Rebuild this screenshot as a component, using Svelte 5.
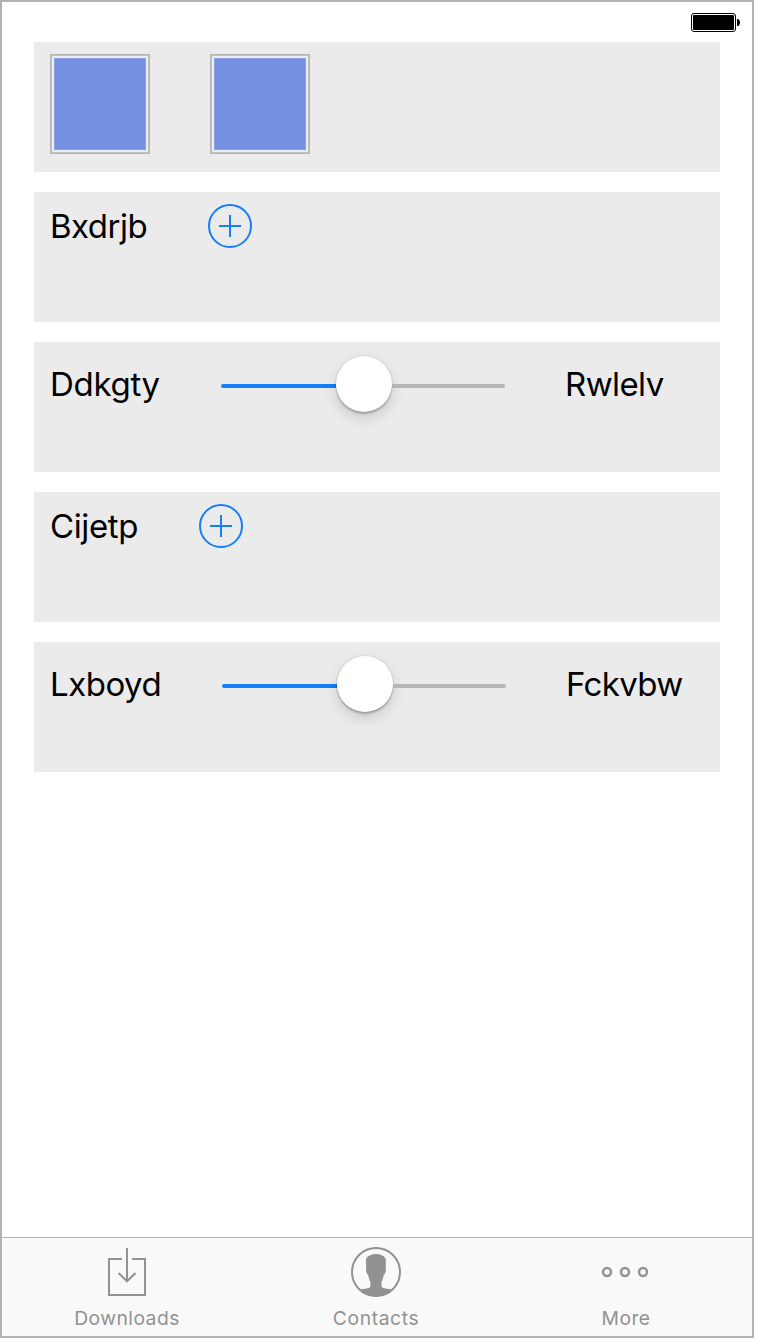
<script>
  const rows = [
    { kind: 'swatches' },
    { kind: 'add', label: 'Bxdrjb', width: 98, spacing: -0.5 },
    { kind: 'slider', label: 'Ddkgty', width: 111, spacing: -0.3, end: 'Rwlelv', endSpacing: -0.6 },
    { kind: 'add', label: 'Cijetp', width: 89, spacing: -0.4 },
    { kind: 'slider', label: 'Lxboyd', width: 112, spacing: -0.5, end: 'Fckvbw', endSpacing: -0.65 }
  ];
</script>

<div class="screen">
  <header>
    <svg width="50" height="20" viewBox="0 0 50 20">
      <rect x="1.5" y="1.5" width="44" height="18" rx="2.5" fill="none" stroke="#000" />
      <rect x="3" y="3" width="41" height="15" rx="1" />
      <path d="M47 7h1.2q1.8 1.2 1.8 3.5t-1.8 3.5h-1.2z" />
    </svg>
  </header>

  <main>
    {#each rows as row}
      <section>
        {#if row.kind === 'swatches'}
          <div class="swatch"></div>
          <div class="swatch"></div>
        {:else if row.kind === 'add'}
          <span class="label" style:width="{row.width}px" style:letter-spacing="{row.spacing}px">{row.label}</span>
          <button aria-label="Add">
            <svg width="44" height="44" viewBox="0 0 44 44" fill="none" stroke="#147efb" stroke-width="2">
              <circle cx="22" cy="22" r="21" />
              <path d="M11 22H33M22 11V33" />
            </svg>
          </button>
        {:else}
          <span class="label tall" style:width="{row.width}px" style:letter-spacing="{row.spacing}px">{row.label}</span>
          <div class="slider">
            <div class="fill"></div>
            <div class="thumb"></div>
            <div class="rest"></div>
          </div>
          <span class="label tall" style:letter-spacing="{row.endSpacing}px">{row.end}</span>
        {/if}
      </section>
    {/each}
  </main>

  <nav>
    <div class="tab">
      <svg width="50" height="50" viewBox="0 0 50 50" fill="none" stroke="#929292" stroke-width="2">
        <path d="M20 12H7V48H43V12H30M25 1V33M16.5 26L25 34.3L33.5 26" />
      </svg>
      <span>Downloads</span>
    </div>
    <div class="tab">
      <svg width="50" height="50" viewBox="0 0 50 50">
        <circle cx="25" cy="25" r="24" fill="none" stroke="#929292" stroke-width="2" />
        <path fill="#929292" d="M9 43C12 41 19 42 19.300 39.500C19.700 37 19.500 35 18.800 33.500Q17.700 31.500 17.200 28C15.700 27.500 14.500 23 15.200 21L14.900 13C15 9.500 20 7 25 7S34.700 9.500 34.900 13L34.700 21C35.400 23 34.200 27.500 32.700 28Q32.200 31.500 31.100 33.500C30.400 35 30.200 37 30.600 39.500C31 42 38 41 41 43Q34 49.500 25 49.500Q16 49.500 9 43Z" />
      </svg>
      <span>Contacts</span>
    </div>
    <div class="tab">
      <svg width="50" height="50" viewBox="0 0 50 50" fill="none" stroke="#929292" stroke-width="2.5">
        <circle cx="6" cy="25" r="4" /><circle cx="24" cy="25" r="4" /><circle cx="42" cy="25" r="4" />
      </svg>
      <span>More</span>
    </div>
  </nav>
</div>

<style>
  :global(body) { background: #fff; }
  .screen {
    box-sizing: border-box;
    width: 754px;
    height: 1338px;
    border: 2px solid #b2b2b2;
    background: #fff;
    display: flex;
    flex-direction: column;
    font-family: Inter, "Liberation Sans", sans-serif;
    color: #000;
  }
  header {
    height: 40px;
    box-sizing: border-box;
    padding: 10px 12px 0 0;
    display: flex;
    justify-content: flex-end;
  }
  svg { display: block; flex: none; }
  main {
    flex: 1;
    padding: 0 32px;
    display: flex;
    flex-direction: column;
    gap: 20px;
  }
  section {
    box-sizing: border-box;
    height: 130px;
    padding: 12px 16px;
    background: #ebebeb;
    display: flex;
    align-items: flex-start;
    gap: 60px;
  }
  .swatch {
    box-sizing: border-box;
    width: 100px;
    height: 100px;
    border: 1px solid #b3b3b3;
    box-shadow: inset 0 0 0 1px #c2c2c2, inset 0 0 0 2px #eeeeee, inset 0 0 0 3px #e4e9fa, inset 0 0 0 4px #8b9fe8;
    background: #758fe3;
  }
  .label {
    flex: none;
    font-size: 33px;
    line-height: 44px;
    white-space: nowrap;
  }
  .label.tall { line-height: 60px; }
  button { padding: 0; border: 0; background: none; }
  .slider {
    width: 284px;
    height: 60px;
    flex: none;
    display: flex;
    align-items: center;
  }
  .fill, .rest { height: 4px; margin-top: 4px; }
  .fill { width: 115px; background: #147efb; border-radius: 2px 0 0 2px; }
  .rest { flex: 1; background: #b6b6b6; border-radius: 0 2px 2px 0; }
  .thumb {
    width: 56px;
    height: 56px;
    border-radius: 50%;
    background: #fff;
    box-shadow: 0 0 0 1px rgba(0, 0, 0, 0.05), 0 2px 2px rgba(0, 0, 0, 0.22), 0 6px 14px rgba(0, 0, 0, 0.15);
  }
  nav {
    height: 99px;
    box-sizing: border-box;
    border-top: 1px solid #b2b2b2;
    background: #f9f9f9;
    display: grid;
    grid-template-columns: 250px 248px 252px;
  }
  .tab {
    display: flex;
    flex-direction: column;
    align-items: center;
    padding-top: 9px;
    color: #929292;
    font-size: 19.300px;
    line-height: 24px;
    letter-spacing: 0.450px;
  }
  .tab:nth-child(2) { letter-spacing: 0.600px; }
  .tab span { margin-top: 9px; }
</style>
